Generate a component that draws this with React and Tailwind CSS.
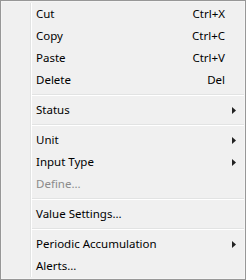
import React from "react"

const groups = [
  [
    { label: 'Cut', shortcut: 'Ctrl+X' },
    { label: 'Copy', shortcut: 'Ctrl+C' },
    { label: 'Paste', shortcut: 'Ctrl+V' },
    { label: 'Delete', shortcut: 'Del' },
  ],
  [{ label: 'Status', sub: true }],
  [
    { label: 'Unit', sub: true },
    { label: 'Input Type', sub: true },
    { label: 'Define...', disabled: true },
  ],
  [{ label: 'Value Settings...' }],
  [
    { label: 'Periodic Accumulation', sub: true },
    { label: 'Alerts...' },
  ],
]

function Arrow() {
  return (
    <svg width="4" height="7" viewBox="0 0 4 7" className="block">
      <path d="M0 0 L4 3.5 L0 7 Z" fill="#222" />
    </svg>
  )
}

function Item({ item }) {
  return (
    <div className="flex h-[22px] items-center">
      <div className="w-[28px] shrink-0" />
      <div className="w-[2px] h-full shrink-0 flex">
        <div className="w-px bg-[#e2e3e3]" />
        <div className="w-px bg-white" />
      </div>
      <div className={`flex-1 pl-[4px] ${item.disabled ? 'text-[#8b8b8b]' : 'text-black'}`}>{item.label}</div>
      {item.shortcut && <div className="pr-[19px] text-black">{item.shortcut}</div>}
      {item.sub && <div className="pr-[8px]"><Arrow /></div>}
    </div>
  )
}

function Separator() {
  return (
    <div className="flex h-[8px]">
      <div className="w-[28px] shrink-0" />
      <div className="w-[2px] shrink-0 flex">
        <div className="w-px bg-[#e2e3e3]" />
        <div className="w-px bg-white" />
      </div>
      <div className="flex-1 pt-[3px]">
        <div className="h-px bg-[#e2e3e3]" />
        <div className="h-px bg-white" />
      </div>
    </div>
  )
}

export default function App() {
  return (
    <div className="w-[246px] h-[280px] border border-[#979797] bg-[#f0f0f0] font-['Segoe_UI','Noto_Sans',sans-serif] text-[11.5px] leading-none">
      <div className="h-full border border-[#f5f5f5] py-px">
        {groups.map((g, i) => (
          <React.Fragment key={i}>
            {i > 0 && <Separator />}
            {g.map((item) => <Item key={item.label} item={item} />)}
          </React.Fragment>
        ))}
      </div>
    </div>
  )
}
